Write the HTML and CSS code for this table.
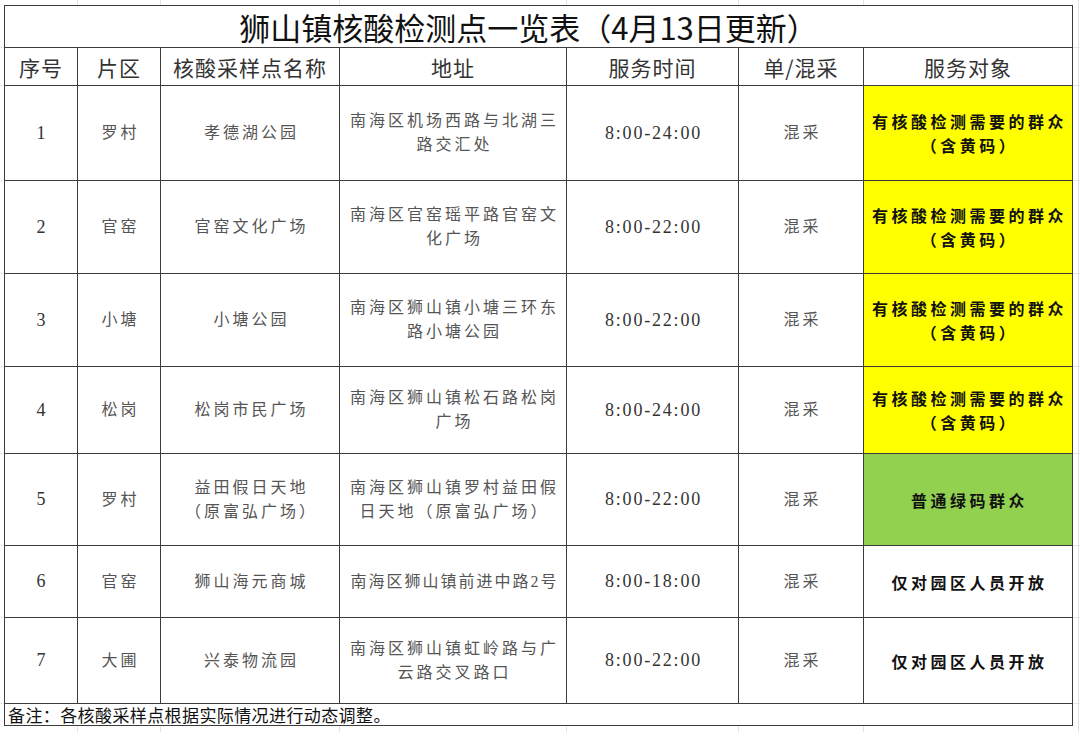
FILE: index.html
```html
<!DOCTYPE html>
<html lang="zh-CN">
<head>
<meta charset="utf-8">
<title>狮山镇核酸检测点一览表</title>
<link rel="stylesheet" href="styles.css">
</head>
<body>
<div class="sheet">
  <table class="list">
    <colgroup>
      <col class="c-no"><col class="c-area"><col class="c-name"><col class="c-addr"><col class="c-time"><col class="c-mode"><col class="c-target">
    </colgroup>
    <tr class="r-title"><td colspan="7" class="title">狮山镇核酸检测点一览表（4月13日更新）</td></tr>
    <tr class="r-head">
      <td class="head">序号</td><td class="head">片区</td><td class="head">核酸采样点名称</td><td class="head">地址</td><td class="head">服务时间</td><td class="head">单/混采</td><td class="head">服务对象</td>
    </tr>
    <tr class="r1">
      <td class="num">1</td><td class="txt">罗村</td><td class="txt">孝德湖公园</td><td class="txt addr">南海区机场西路与北湖三<br>路交汇处</td><td class="num time">8:00-24:00</td><td class="txt">混采</td><td class="target yellow">有核酸检测需要的群众<br>（含黄码）</td>
    </tr>
    <tr class="r2">
      <td class="num">2</td><td class="txt">官窑</td><td class="txt">官窑文化广场</td><td class="txt addr">南海区官窑瑶平路官窑文<br>化广场</td><td class="num time">8:00-22:00</td><td class="txt">混采</td><td class="target yellow">有核酸检测需要的群众<br>（含黄码）</td>
    </tr>
    <tr class="r3">
      <td class="num">3</td><td class="txt">小塘</td><td class="txt">小塘公园</td><td class="txt addr">南海区狮山镇小塘三环东<br>路小塘公园</td><td class="num time">8:00-22:00</td><td class="txt">混采</td><td class="target yellow">有核酸检测需要的群众<br>（含黄码）</td>
    </tr>
    <tr class="r4">
      <td class="num">4</td><td class="txt">松岗</td><td class="txt">松岗市民广场</td><td class="txt addr">南海区狮山镇松石路松岗<br>广场</td><td class="num time">8:00-24:00</td><td class="txt">混采</td><td class="target yellow">有核酸检测需要的群众<br>（含黄码）</td>
    </tr>
    <tr class="r5">
      <td class="num">5</td><td class="txt">罗村</td><td class="txt">益田假日天地<br>（原富弘广场）</td><td class="txt addr">南海区狮山镇罗村益田假<br>日天地（原富弘广场）</td><td class="num time">8:00-22:00</td><td class="txt">混采</td><td class="target green">普通绿码群众</td>
    </tr>
    <tr class="r6">
      <td class="num">6</td><td class="txt">官窑</td><td class="txt">狮山海元商城</td><td class="txt addr tight">南海区狮山镇前进中路2号</td><td class="num time">8:00-18:00</td><td class="txt">混采</td><td class="target">仅对园区人员开放</td>
    </tr>
    <tr class="r7">
      <td class="num">7</td><td class="txt">大圃</td><td class="txt">兴泰物流园</td><td class="txt addr">南海区狮山镇虹岭路与广<br>云路交叉路口</td><td class="num time">8:00-22:00</td><td class="txt">混采</td><td class="target">仅对园区人员开放</td>
    </tr>
    <tr class="r-note"><td colspan="7" class="note">备注：各核酸采样点根据实际情况进行动态调整。</td></tr>
  </table>
</div>
</body>
</html>
```

FILE: styles.css
```css
html, body {
  margin: 0;
  padding: 0;
  background: #ffffff;
}

.sheet {
  width: 1080px;
  height: 732px;
  box-sizing: border-box;
  padding: 5px 0 0 4px;
  overflow: hidden;
  background-color: #ffffff;
  background-image:
    linear-gradient(to right, transparent 77px, #e3e3e3 77px, #e3e3e3 78px, transparent 78px),
    linear-gradient(to right, transparent 160px, #e3e3e3 160px, #e3e3e3 161px, transparent 161px),
    linear-gradient(to right, transparent 339px, #e3e3e3 339px, #e3e3e3 340px, transparent 340px),
    linear-gradient(to right, transparent 566px, #e3e3e3 566px, #e3e3e3 567px, transparent 567px),
    linear-gradient(to right, transparent 738px, #e3e3e3 738px, #e3e3e3 739px, transparent 739px),
    linear-gradient(to right, transparent 863px, #e3e3e3 863px, #e3e3e3 864px, transparent 864px),
    linear-gradient(to right, transparent 1078px, #e3e3e3 1078px, #e3e3e3 1079px, transparent 1079px),
    linear-gradient(to bottom, transparent 47px, #e6e6e6 47px, #e6e6e6 48px, transparent 48px),
    linear-gradient(to bottom, transparent 85px, #e6e6e6 85px, #e6e6e6 86px, transparent 86px),
    linear-gradient(to bottom, transparent 180px, #e6e6e6 180px, #e6e6e6 181px, transparent 181px),
    linear-gradient(to bottom, transparent 273px, #e6e6e6 273px, #e6e6e6 274px, transparent 274px),
    linear-gradient(to bottom, transparent 366px, #e6e6e6 366px, #e6e6e6 367px, transparent 367px),
    linear-gradient(to bottom, transparent 453px, #e6e6e6 453px, #e6e6e6 454px, transparent 454px),
    linear-gradient(to bottom, transparent 545px, #e6e6e6 545px, #e6e6e6 546px, transparent 546px),
    linear-gradient(to bottom, transparent 617px, #e6e6e6 617px, #e6e6e6 618px, transparent 618px),
    linear-gradient(to bottom, transparent 703px, #e6e6e6 703px, #e6e6e6 704px, transparent 704px);
}

.list {
  border-collapse: collapse;
  table-layout: fixed;
  width: 1068px;
  background: #ffffff;
  font-family: "Liberation Serif", "Noto Sans CJK SC", serif;
}

.c-no { width: 73px; }
.c-area { width: 83px; }
.c-name { width: 179px; }
.c-addr { width: 227px; }
.c-time { width: 172px; }
.c-mode { width: 125px; }
.c-target { width: 209px; }

.list td {
  border: 1px solid #3c3c3c;
  padding: 0;
  text-align: center;
  vertical-align: middle;
  white-space: nowrap;
}

.r-title { height: 42px; }
.r-head { height: 38px; }
.r1 { height: 95px; }
.r2 { height: 93px; }
.r3 { height: 93px; }
.r4 { height: 87px; }
.r5 { height: 92px; }
.r6 { height: 72px; }
.r7 { height: 86px; }
.r-note { height: 22px; }

.title {
  font-family: "Noto Sans CJK SC", sans-serif;
  font-size: 31px;
  font-weight: 400;
  line-height: 40px;
  color: #111111;
  padding-right: 20px !important;
}

.head {
  font-family: "Noto Sans CJK SC", sans-serif;
  font-size: 21px;
  font-weight: 400;
  letter-spacing: 1px;
  line-height: 36px;
  color: #333333;
}

.num {
  font-family: "Liberation Serif", serif;
  font-size: 18px;
  color: #333333;
}

.time {
  letter-spacing: 1.8px;
  padding-left: 2px !important;
}

.txt {
  font-family: "Liberation Serif", "Noto Sans CJK SC", serif;
  font-size: 16px;
  letter-spacing: 3px;
  padding-left: 3px !important;
  line-height: 24px;
  color: #555555;
}

.addr {
  letter-spacing: 3px;
}

.addr.tight {
  letter-spacing: 2px;
}

.target {
  font-family: "Noto Sans CJK SC", sans-serif;
  font-size: 16px;
  font-weight: 700;
  letter-spacing: 3.5px;
  padding-left: 3px !important;
  line-height: 24px;
  color: #111111;
}

.yellow { background: #ffff00; }
.green { background: #92d050; }

.note {
  font-family: "Noto Sans CJK SC", sans-serif;
  font-size: 17px;
  letter-spacing: 0.4px;
  line-height: 20px;
  text-align: left !important;
  padding-left: 3px !important;
  color: #111111;
}
```
